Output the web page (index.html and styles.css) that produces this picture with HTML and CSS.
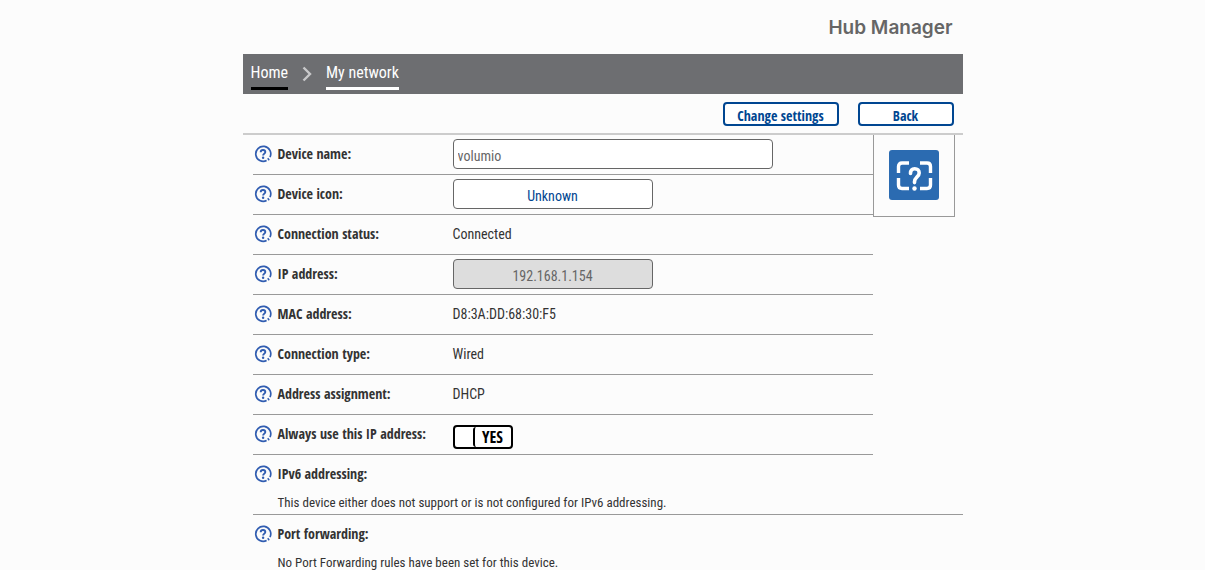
FILE: index.html
```html
<!DOCTYPE html>
<html lang="en">
<head>
<meta charset="utf-8">
<title>Hub Manager</title>
<link rel="stylesheet" href="styles.css">
</head>
<body>
<svg width="0" height="0" class="sprite" aria-hidden="true">
  <symbol id="help" viewBox="0 0 18 18">
    <path d="M16 12.200A7.500 7.500 0 1 0 12.600 15.600" fill="none" stroke="#315db1" stroke-width="1.700"/>
    <path d="M13.700 13.200l1.500 2" fill="none" stroke="#315db1" stroke-width="1.500"/>
    <path d="M6.700 7.200C6.700 5.600 7.800 5 9 5s2.300.7 2.300 2c0 1.600-2.200 1.700-2.200 3.600" fill="none" stroke="#315db1" stroke-width="1.900"/>
    <circle cx="9.100" cy="12.800" r="1.200" fill="#315db1"/>
  </symbol>
</svg>
<div class="page">
  <header class="brand"><h1>Hub Manager</h1></header>
  <nav class="crumbs" aria-label="Breadcrumb">
    <a class="crumb crumb-home" href="#">Home</a>
    <svg class="chevron" viewBox="0 0 10 16" aria-hidden="true"><path d="M1.500 1.500L8 8l-6.500 6.500" fill="none" stroke="#c8c8ca" stroke-width="2.400"/></svg>
    <a class="crumb" href="#">My network</a>
  </nav>
  <div class="actions">
    <button class="action action-wide" type="button">Change settings</button>
    <button class="action" type="button">Back</button>
  </div>
  <main class="content">
    <div class="overview">
      <div class="rows">
        <div class="row"><svg class="help"><use href="#help"/></svg><label class="name" for="device">Device name:</label><input class="field field-text" id="device" type="text" value="volumio"></div>
        <div class="row"><svg class="help"><use href="#help"/></svg><label class="name" for="icon">Device icon:</label><button class="field field-pick" id="icon" type="button">Unknown</button></div>
        <div class="row"><svg class="help"><use href="#help"/></svg><span class="name">Connection status:</span><span class="value">Connected</span></div>
        <div class="row"><svg class="help"><use href="#help"/></svg><label class="name" for="ip">IP address:</label><input class="field field-ip" id="ip" type="text" value="192.168.1.154" disabled></div>
        <div class="row"><svg class="help"><use href="#help"/></svg><span class="name">MAC address:</span><span class="value">D8:3A:DD:68:30:F5</span></div>
        <div class="row"><svg class="help"><use href="#help"/></svg><span class="name">Connection type:</span><span class="value">Wired</span></div>
        <div class="row"><svg class="help"><use href="#help"/></svg><span class="name">Address assignment:</span><span class="value">DHCP</span></div>
        <div class="row"><svg class="help"><use href="#help"/></svg><label class="name" for="always">Always use this IP address:</label><label class="switch"><input id="always" type="checkbox" checked><span class="thumb">YES</span></label></div>
      </div>
      <div class="device-box">
        <svg class="device" viewBox="0 0 50 50" role="img" aria-label="Unknown device">
          <rect width="50" height="50" rx="3" fill="#2b6bb1"/>
          <g fill="none" stroke="#fff" stroke-width="3.400">
            <path d="M9.500 23v-6.500q0-3.500 3.500-3.500h7M31 13h7q3.500 0 3.500 3.500V23M9.500 28v7q0 3.500 3.500 3.500h7M31 38.500h7q3.500 0 3.500-3.500v-7"/>
            <path d="M21.500 23.500c0-3.200 1.600-4.800 4.200-4.800 2.700 0 4.500 1.700 4.500 4.200 0 3.900-4.700 4.600-4.700 8.900v.8" stroke-width="3.600" stroke-linecap="round"/>
          </g>
          <circle cx="25.500" cy="38.500" r="2.200" fill="#fff"/>
        </svg>
      </div>
    </div>
    <section class="section">
      <div class="title"><svg class="help"><use href="#help"/></svg><h2 class="name">IPv6 addressing:</h2></div>
      <p class="note">This device either does not support or is not configured for IPv6 addressing.</p>
    </section>
    <section class="section section-last">
      <div class="title"><svg class="help"><use href="#help"/></svg><h2 class="name">Port forwarding:</h2></div>
      <p class="note">No Port Forwarding rules have been set for this device.</p>
    </section>
  </main>
</div>
</body>
</html>
```
FILE: styles.css
```css
* { box-sizing: border-box; }
body {
  margin: 0;
  background: #fcfcfc;
  color: #333;
  font: 14px/20px "Roboto Condensed", Roboto, sans-serif;
}
.sprite { position: absolute; }
.page { max-width: 720px; margin: 0 auto; }
.brand { display: flex; justify-content: flex-end; padding: 14px 10px 12px; }
h1 { margin: 0; font: 600 19px/28px Inter, sans-serif; color: #666; }
.crumbs { display: flex; align-items: flex-start; gap: 14px; height: 40px; padding: 4px 8px; background: #6d6e71; }
.crumb { color: #fff; font-size: 16px; line-height: 29px; text-decoration: none; border-bottom: 3px solid #fff; }
.crumb-home { border-color: #000; }
.chevron { width: 10px; height: 16px; margin-top: 8px; }
.actions { display: flex; justify-content: flex-end; gap: 19px; padding: 8px 9px 7px; border-bottom: 2px solid #ccc; }
.action {
  width: 96px; height: 24px; padding: 2px 0 0;
  border: 2px solid #004691; border-radius: 4px; background: #fff;
  color: #004691; font: bold 14px/20px "Open Sans Condensed", "Open Sans", sans-serif;
}
.action-wide { width: 116px; }
.content { padding-left: 10px; }
.overview { display: flex; align-items: flex-start; padding-right: 8px; }
.rows { flex: 1; }
.row { display: flex; align-items: flex-start; height: 40px; padding: 4px 0 0 1px; border-bottom: 1px solid #999; }
.help { flex: none; width: 18px; height: 18px; margin: 6px 6px 0 0; }
.name { flex: none; width: 175px; margin: 0; padding-top: 5px; font: bold 14px/20px "Open Sans Condensed", "Open Sans", sans-serif; }
.value { padding-top: 5px; }
.field {
  width: 200px; height: 30px; padding: 3px 4px 0;
  border: 1px solid #666; border-radius: 4px; background: #fff;
  color: #666; font: 14px/20px "Roboto Condensed", Roboto, sans-serif;
}
.field-text { width: 320px; }
.field-pick { color: #004691; }
.field-ip { background: #ddd; text-align: center; }
.switch {
  display: flex; justify-content: flex-end; width: 60px; height: 24px; margin-top: 6px;
  border: 2px solid #000; border-radius: 4px; background: #fff;
}
.switch input { appearance: none; flex: 1; margin: 0; }
.thumb { width: 38px; border-left: 2px solid #000; border-radius: 3px; color: #000; font: bold 16px/20px "Open Sans Condensed", "Open Sans", sans-serif; text-align: center; }
.device-box { width: 82px; height: 82px; padding: 15px; border: 1px solid #999; border-top: 0; }
.device { display: block; width: 50px; height: 50px; }
.section { padding: 4px 0 1px 1px; border-bottom: 1px solid #999; }
.section-last { padding-bottom: 0; border: 0; }
.title { display: flex; align-items: flex-start; }
.note { margin: 0; padding: 9px 0 0 24px; font-size: 13px; }
```
